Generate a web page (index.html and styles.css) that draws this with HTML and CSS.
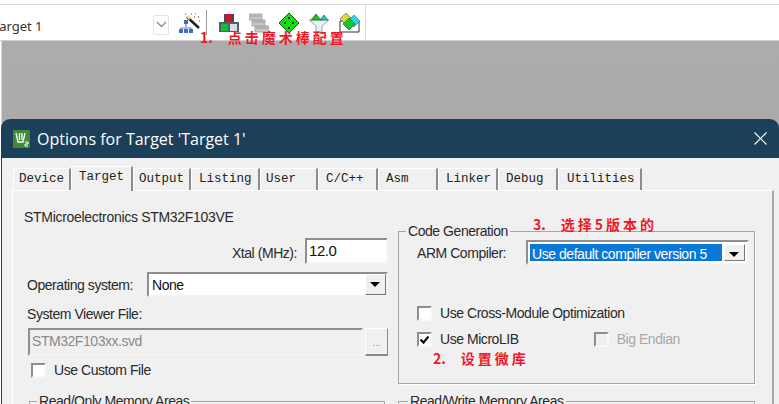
FILE: index.html
```html
<!DOCTYPE html>
<html lang="en">
<head>
  <meta charset="UTF-8" />
  <title>Options for Target</title>
  <link rel="stylesheet" href="styles.css">
</head>
<body>

<div class="topline"></div>
<div class="toolbar">
  <div class="toolbar-main">
    <span class="target-name">Target 1</span>
    <span class="chevron">
      <svg width="11" height="7" viewBox="0 0 11 7"><path d="M1 1l4.500 4.500L10 1" fill="none" stroke="#8a8a8a" stroke-width="1.300"/></svg>
    </span>
    <svg class="wand" width="22" height="20" viewBox="0 0 22 20">
      <path d="M8 4l12 11" stroke="#222" stroke-width="2.500"/>
      <path d="M8 3l3 3" stroke="#e8d080" stroke-width="2.500"/>
      <path d="M12 1h1M16 0.500h1M19 4h1M15 4h1M20 8h1M6 1h1" stroke="#d0605a" stroke-width="1.300"/>
      <path d="M7 8v6M2 19v-4h10v4" fill="none" stroke="#5a7fc0" stroke-width="1.100"/>
      <path d="M5 7h4v4H5zM0 16h4v4H0zM5 16h4v4H5zM10 16h4v4h-4z" fill="#3a6ec8"/>
    </svg>
    <span class="tool-sep"></span>
    <svg width="20" height="20" viewBox="0 0 20 20">
      <path d="M5 1h10v9H5z" fill="#33506e"/>
      <path d="M7 1h6v9H7z" fill="#e01018"/>
      <path d="M0 9h20v10H0z" fill="#4a6078"/>
      <path d="M2 11h7v7H2z" fill="#10c030"/>
      <path d="M11 11h7v7h-7z" fill="#dcdcdc"/>
    </svg>
    <svg width="20" height="20" viewBox="0 0 20 20">
      <path d="M0 1h13v6H0zM3 7h13v6H3zM6 13h14v6H6z" fill="#c8c8c8" stroke="#a8a8a8"/>
      <path d="M1 3h11M4 9h11M7 15h12" stroke="#9a9a9a"/>
    </svg>
    <svg width="20" height="20" viewBox="0 0 20 20">
      <path d="M10 0l10 10-10 10L0 10z" fill="#10e010" stroke="#205020"/>
      <path d="M9 4h2v2H9zM5 9h2v2H5zM13 9h2v2h-2zM9 14h2v2H9z" fill="#102010"/>
    </svg>
    <svg width="20" height="20" viewBox="0 0 20 20">
      <path d="M0 7h20l-7 6v6H7v-6z" fill="#dff4f6" stroke="#9aa8aa"/>
      <path d="M11 7l4-5 4 5z" fill="#20c8c0" stroke="#205050" stroke-width=".6"/>
      <path d="M2 7l5-6 5 6z" fill="#10c818" stroke="#205020" stroke-width=".6"/>
    </svg>
    <svg width="21" height="20" viewBox="0 0 21 20">
      <path d="M1 8h19v11H1z" fill="#fff" stroke="#333"/>
      <path d="M7 0l6 6-6 6-6-6z" fill="#d8d830" stroke="#555" stroke-width=".6"/>
      <path d="M15 2l6 6-6 6-6-6z" fill="#20d8e8" stroke="#555" stroke-width=".6"/>
      <path d="M10 5l6 6-6 6-6-6z" fill="#10c830" stroke="#205020" stroke-width=".6"/>
    </svg>
  </div>
</div>

<div class="workspace">
  <div class="dialog">
    <div class="titlebar">
      <svg class="app-icon" width="17" height="18" viewBox="0 0 17 18">
        <rect width="17" height="18" rx="1" fill="#3f8a3a"/>
        <path d="M3 3l2 9h5l2-9M6.500 3v7M9 3v7" fill="none" stroke="#fff" stroke-width="1.300"/>
        <path d="M12 12h3v2h-3v2h3" fill="none" stroke="#fff"/>
      </svg>
      <span class="title-text">Options for Target 'Target 1'</span>
      <svg class="close" width="13" height="13" viewBox="0 0 13 13"><path d="M.5.5l12 12M12.500.5l-12 12" stroke="#fff" stroke-width="1.100"/></svg>
    </div>

    <div class="dialog-body">
      <div class="tabs">
        <span class="tab">Device</span>
        <span class="tab tab-active">Target</span>
        <span class="tab">Output</span>
        <span class="tab tab-listing">Listing</span>
        <span class="tab">User</span>
        <span class="tab tab-mid">C/C++</span>
        <span class="tab tab-mid">Asm</span>
        <span class="tab tab-mid">Linker</span>
        <span class="tab tab-mid">Debug</span>
        <span class="tab tab-util">Utilities</span>
      </div>

      <div class="panel">
        <div class="col-left">
          <div class="device-name">STMicroelectronics STM32F103VE</div>
          <div class="xtal-row">
            <label class="xtal-label">Xtal (MHz):</label>
            <span class="field xtal-field">12.0</span>
          </div>
          <div class="os-row">
            <label>Operating system:</label>
            <span class="combo os-combo">
              <span class="combo-value">None</span>
              <span class="combo-btn"></span>
            </span>
          </div>
          <div class="viewer-label">System Viewer File:</div>
          <div class="viewer-row">
            <span class="field viewer-field">STM32F103xx.svd</span>
            <span class="dots-btn">...</span>
          </div>
          <div class="check-row custom-file">
            <span class="check"></span>
            <label>Use Custom File</label>
          </div>
          <fieldset class="group ro-group">
            <legend>Read/Only Memory Areas</legend>
          </fieldset>
        </div>

        <div class="col-right">
          <fieldset class="group code-group">
            <legend>Code Generation</legend>
            <div class="compiler-row">
              <label>ARM Compiler:</label>
              <span class="combo compiler-combo">
                <span class="combo-value combo-selected">Use default compiler version 5</span>
                <span class="combo-btn"></span>
              </span>
            </div>
            <div class="check-row cross-module">
              <span class="check"></span>
              <label>Use Cross-Module Optimization</label>
            </div>
            <div class="check-row microlib">
              <span class="check">
                <svg width="13" height="13" viewBox="0 0 13 13"><path d="M2.500 6.500l3 3 5-6" fill="none" stroke="#111" stroke-width="2.200"/></svg>
              </span>
              <label>Use MicroLIB</label>
              <span class="check check-disabled"></span>
              <label class="label-disabled">Big Endian</label>
            </div>
          </fieldset>
          <fieldset class="group rw-group">
            <legend>Read/Write Memory Areas</legend>
          </fieldset>
        </div>
      </div>
    </div>
  </div>
</div>

<!-- red notes typed over the screenshot -->
<div class="note note-1">1.<span class="note-cjk">点击魔术棒配置</span></div>
<div class="note note-2">2.<span class="note-cjk">设置微库</span></div>
<div class="note note-3">3.<span class="note-cjk">选择5版本的</span></div>

</body>
</html>
```

FILE: styles.css
```css
html, body {
  margin: 0;
  height: 404px;
  overflow: hidden;
}

body {
  position: relative;
  background-color: #fff;
  font-family: "Liberation Sans", Arial, sans-serif;
  font-size: 14px;
  color: #222;
}

.topline {
  height: 5px;
  border-bottom: 1px solid #d8d8d8;
  box-sizing: border-box;
}

.toolbar {
  height: 36px;
  box-sizing: border-box;
  border-bottom: 1px solid #cfcfcf;
  background-color: #fff;
}

.toolbar-main {
  width: 366px;
  height: 36px;
  box-sizing: border-box;
  border-right: 1px solid #dcdcdc;
  border-bottom: 1px solid #cfcfcf;
  display: flex;
  align-items: center;
  gap: 10px;
  overflow: hidden;
}

.target-name {
  width: 153px;
  margin-left: -7px;
  margin-right: -3px;
  margin-top: 6px;
  flex-shrink: 0;
  font-family: "Noto Sans", sans-serif;
  font-size: 13px;
  color: #333;
}

.chevron {
  width: 16px;
  height: 20px;
  margin-top: 4px;
  box-sizing: border-box;
  border: 1px solid #e4e4e4;
  border-radius: 2px;
  display: flex;
  align-items: center;
  justify-content: center;
}

.wand {
  margin-top: 1px;
}

.tool-sep {
  width: 1px;
  height: 25px;
  background-color: #9a9a9a;
  margin: 0 2px 0 -5px;
}

.workspace {
  height: 363px;
  padding-left: 3px;
  box-sizing: border-box;
  display: flex;
}

.dialog {
  flex: 1;
  margin-left: -1px;
  padding-top: 78px;
  background: linear-gradient(#acacac, #a4a4a4);
  box-shadow: -1px 0 0 #d8d8d8;
}

.titlebar {
  height: 39px;
  background-color: #1c3f5a;
  border-radius: 9px 9px 0 0;
  margin-left: -1px;
  display: flex;
  align-items: center;
  padding: 0 12px 0 12px;
  color: #fff;
}

.app-icon {
  margin-right: 7px;
}

.title-text {
  flex: 1;
  font-family: "Open Sans", sans-serif;
  font-size: 16px;
}

.dialog-body {
  margin-left: -1px;
  height: 250px;
  padding: 8px 5px 0 10px;
  box-sizing: border-box;
  background-color: #f0f0f0;
  border-left: 1px solid #1c3f5a;
}

.tabs {
  display: flex;
  align-items: flex-end;
  height: 24px;
  padding-left: 1px;
  font-family: "Liberation Mono", monospace;
  font-size: 12.500px;
  color: #222;
}

.tab {
  width: 58px;
  height: 22px;
  box-sizing: border-box;
  padding-left: 5px;
  line-height: 21px;
  border-top: 1px solid #fff;
  border-left: 1px solid #fff;
  border-right: 2px solid #8c8c8c;
}

.tab-active {
  width: 62px;
  height: 25px;
  padding-left: 7px;
  line-height: 20px;
  margin-bottom: -1px;
  background-color: #f0f0f0;
  position: relative;
}

.tab-listing {
  width: 69px;
  padding-left: 7px;
}

.tab-mid {
  width: 60px;
  padding-left: 7px;
}

.tab-util {
  width: 84px;
  padding-left: 8px;
}

.panel {
  height: 230px;
  box-sizing: border-box;
  border-top: 1px solid #fff;
  border-left: 1px solid #fff;
  border-right: 2px solid #a8a8a8;
  display: flex;
  padding-left: 11px;
  color: #2a2a2a;
  letter-spacing: -0.450px;
}

.col-left {
  width: 364px;
}

.col-right {
  width: 357px;
  margin-left: 10px;
}

.device-name {
  margin-top: 17px;
  height: 18px;
  line-height: 18px;
  letter-spacing: -0.300px;
}

.xtal-row {
  display: flex;
  justify-content: flex-end;
  align-items: center;
  gap: 8px;
  margin-top: 12px;
}

.xtal-label {
  padding-top: 4px;
}

.field {
  display: block;
  box-sizing: border-box;
  background-color: #fff;
  border: 2px solid #8e8e8e;
  border-right-color: #f4f4f4;
  border-bottom-color: #f4f4f4;
  padding-left: 2px;
}

.xtal-field {
  width: 83px;
  height: 26px;
  line-height: 22px;
  font-size: 15px;
  color: #111;
}

.os-row {
  display: flex;
  align-items: center;
  margin-top: 8px;
  padding-left: 3px;
}

.os-row label {
  width: 120px;
}

.combo {
  box-sizing: border-box;
  display: flex;
  align-items: stretch;
  background-color: #fff;
  border: 2px solid #8e8e8e;
  border-right-color: #f4f4f4;
  border-bottom-color: #f4f4f4;
}

.os-combo {
  width: 241px;
  height: 25px;
}

.combo-value {
  flex: 1;
  padding-left: 3px;
  line-height: 22px;
  color: #111;
}

.combo-btn {
  width: 19px;
  position: relative;
  background-color: #f0f0f0;
  border-left: 1px solid #fff;
  border-top: 1px solid #fff;
  border-right: 1px solid #777;
  border-bottom: 1px solid #777;
}

.combo-btn::after {
  content: "";
  position: absolute;
  left: 4px;
  top: 7px;
  border-left: 5px solid transparent;
  border-right: 5px solid transparent;
  border-top: 5px solid #000;
}

.viewer-label {
  margin-top: 8px;
  padding-left: 3px;
  height: 18px;
  line-height: 18px;
}

.viewer-row {
  display: flex;
  margin-top: 5px;
  margin-left: 4px;
}

.viewer-field {
  width: 336px;
  height: 28px;
  line-height: 23px;
  background-color: #f0f0f0;
  color: #8a8a8a;
}

.dots-btn {
  width: 23px;
  height: 28px;
  margin-left: 2px;
  box-sizing: border-box;
  border-top: 1px solid #fff;
  border-left: 1px solid #fff;
  border-right: 1px solid #8a8a8a;
  border-bottom: 2px solid #8a8a8a;
  text-align: center;
  line-height: 26px;
  font-size: 11px;
  color: #a0a0a0;
}

.check-row {
  display: flex;
  align-items: center;
  height: 16px;
}

.check {
  width: 15px;
  height: 15px;
  box-sizing: border-box;
  background-color: #fff;
  border: 2px solid #8e8e8e;
  border-right-color: #f8f8f8;
  border-bottom-color: #f8f8f8;
  margin-right: 8px;
  display: flex;
  align-items: center;
  justify-content: center;
  flex-shrink: 0;
}

.check svg {
  flex-shrink: 0;
}

.check-disabled {
  margin-left: 75px;
  background-color: #f0f0f0;
}

.label-disabled {
  color: #a8a8a8;
}

.custom-file {
  margin-top: 6px;
  margin-left: 7px;
}

.group {
  margin: 0;
  padding: 0;
  box-sizing: border-box;
  border: 1px solid #a6a6a6;
  box-shadow: 1px 1px 0 #fff;
  min-width: 0;
}

.group legend {
  padding: 0 2px;
  margin-left: 7px;
  line-height: 16px;
}

.ro-group {
  margin-top: 15px;
  margin-left: 5px;
  width: 356px;
  height: 40px;
}

.code-group {
  margin-top: 32px;
  height: 161px;
}

.rw-group {
  margin-top: 9px;
  height: 40px;
}

.rw-group legend {
  margin-left: 9px;
}

.compiler-row {
  display: flex;
  align-items: center;
  margin-top: 1px;
  margin-left: 18px;
}

.compiler-row label {
  width: 109px;
}

.compiler-combo {
  width: 223px;
  height: 25px;
  padding: 2px;
}

.combo-selected {
  background-color: #0a78d7;
  color: #fff;
  line-height: 20px;
  padding-left: 2px;
  margin-right: 2px;
}

.cross-module {
  margin-top: 40px;
  margin-left: 18px;
}

.microlib {
  margin-top: 10px;
  margin-left: 18px;
}

.note {
  position: absolute;
  font-family: "Noto Sans CJK SC", sans-serif;
  font-size: 14px;
  font-weight: bold;
  line-height: 18px;
  color: #f01828;
  letter-spacing: 0;
  white-space: nowrap;
}

.note-cjk {
  margin-left: 15px;
  letter-spacing: 3px;
}

.note-1 {
  left: 200px;
  top: 28px;
}

.note-2 {
  left: 433px;
  top: 349px;
}

.note-3 {
  left: 533px;
  top: 215px;
}
```
